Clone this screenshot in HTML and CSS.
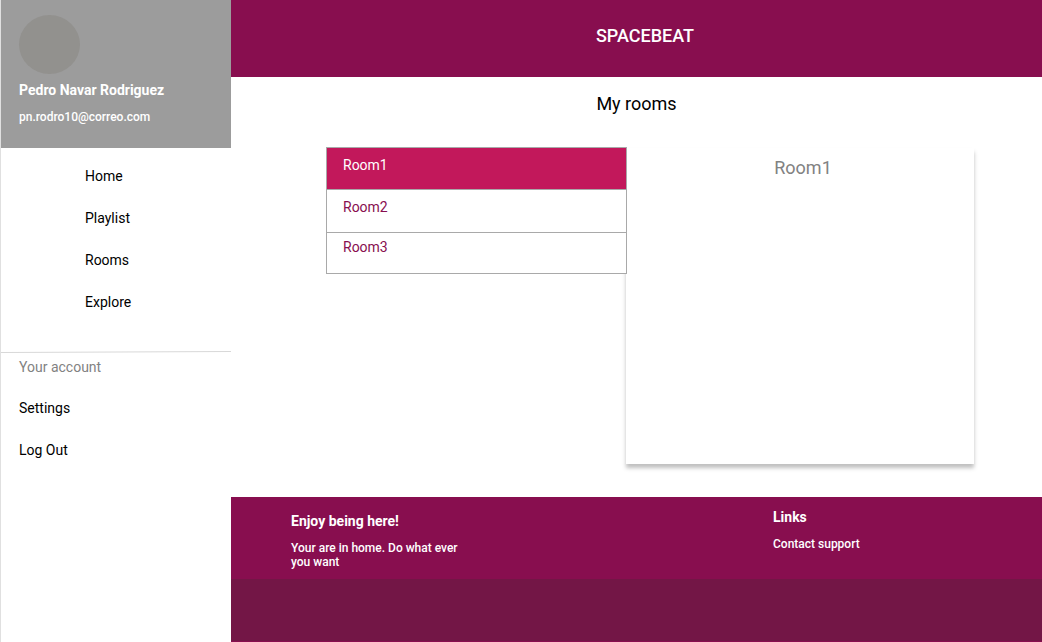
FILE: index.html
```html
<!DOCTYPE html>
<html lang="en">
<head>
<meta charset="utf-8">
<meta name="viewport" content="width=device-width, initial-scale=1">
<title>Spacebeat</title>
<link rel="stylesheet" href="styles.css">
</head>
<body>
<div class="app">
  <aside class="sidebar">
    <div class="profile">
      <div class="avatar"></div>
      <p class="profile-name">Pedro Navar Rodriguez</p>
      <p class="profile-mail">pn.rodro10@correo.com</p>
    </div>
    <nav class="menu menu-main">
      <a href="#home">Home</a>
      <a href="#playlist">Playlist</a>
      <a href="#rooms">Rooms</a>
      <a href="#explore">Explore</a>
    </nav>
    <svg class="divider" viewBox="0 0 230 2" preserveAspectRatio="none" aria-hidden="true"><path d="M0 1.5L230 .5" stroke="#d8d8d8" stroke-width="1"/></svg>
    <h2 class="account-title">Your account</h2>
    <nav class="menu menu-account">
      <a href="#settings">Settings</a>
      <a href="#logout">Log Out</a>
    </nav>
  </aside>
  <div class="page">
    <header class="topbar"><h1>SPACEBEAT</h1></header>
    <main class="content">
      <h2 class="content-title">My rooms</h2>
      <div class="rooms">
        <div class="room-list">
          <button type="button" class="room room-active">Room1</button>
          <button type="button" class="room">Room2</button>
          <button type="button" class="room">Room3</button>
        </div>
        <section class="room-panel"><h3>Room1</h3></section>
      </div>
    </main>
    <footer class="footer">
      <div class="footer-main">
        <section class="footer-about">
          <h2>Enjoy being here!</h2>
          <p>Your are in home. Do what ever you want</p>
        </section>
        <section class="footer-links">
          <h2>Links</h2>
          <a href="#support">Contact support</a>
        </section>
      </div>
      <div class="footer-strip"></div>
    </footer>
  </div>
</div>
</body>
</html>
```

FILE: styles.css
```css
* {
  box-sizing: border-box;
}

body,
h1,
h2,
h3,
p {
  margin: 0;
}

body {
  font-family: Roboto, "Liberation Sans", sans-serif;
  font-size: 14px;
  line-height: 20px;
  color: #000;
  background: #fff;
}

a {
  color: inherit;
  text-decoration: none;
}

.app {
  display: grid;
  grid-template-columns: 231px 1fr;
  min-height: 100vh;
}

.sidebar {
  border-left: 1px solid #e0e0e0;
}

.profile {
  padding: 15px 18px 21px;
  color: #fff;
  background: #9c9c9c;
}

.avatar {
  width: 61px;
  height: 59px;
  border-radius: 50%;
  background: #92918e;
}

.profile-name {
  margin-top: 6px;
  font-weight: 700;
}

.profile-mail {
  margin-top: 7px;
  font-size: 12px;
  font-weight: 500;
}

.menu {
  display: flex;
  flex-direction: column;
  gap: 22px;
}

.menu-main {
  padding: 18px 18px 39px 84px;
}

.divider {
  display: block;
  width: 100%;
  height: 2px;
}

.account-title {
  padding: 4px 18px 0;
  font-size: 14px;
  font-weight: 400;
  color: #828282;
}

.menu-account {
  padding: 21px 18px;
}

.page {
  display: flex;
  flex-direction: column;
}

.topbar {
  padding: 24px 0 29px 17px;
  text-align: center;
  color: #fff;
  background: #880e4f;
}

.topbar h1 {
  font-size: 18px;
  font-weight: 500;
  line-height: 24px;
}

.content {
  flex: 1;
  display: flex;
  flex-direction: column;
  padding: 15px 68px 33px 95px;
}

.content-title {
  margin: 0 -68px 0 -95px;
  font-size: 18px;
  font-weight: 400;
  line-height: 24px;
  text-align: center;
}

.rooms {
  flex: 1;
  display: grid;
  grid-template-columns: 300fr 348fr;
  margin-top: 31px;
}

.room-list {
  z-index: 1;
  display: flex;
  flex-direction: column;
  align-self: start;
  margin-right: -1px;
  border: 1px solid #a9a9a9;
}

.room {
  padding: 7px 16px 14px;
  border: 0;
  font: inherit;
  text-align: left;
  color: #880e4f;
  background: #fff;
}

.room + .room {
  border-top: 1px solid #a9a9a9;
}

.room:nth-child(2) {
  padding-bottom: 15px;
  padding-top: 7px;
}

.room:last-child {
  padding-top: 4px;
  padding-bottom: 16px;
}

.room-active {
  color: #fff;
  background: #c2185b;
}

.room-panel {
  margin-top: 1px;
  padding: 8px 0 0 6px;
  text-align: center;
  background: #fff;
  box-shadow: 0 4px 4px rgba(0, 0, 0, 0.25);
}

.room-panel h3 {
  font-size: 18px;
  font-weight: 400;
  line-height: 24px;
  color: #828282;
}

.footer {
  padding-bottom: 1px;
  color: #fff;
  background: #880e4f;
}

.footer-main {
  display: grid;
  grid-template-columns: 482fr 269fr;
  padding: 10px 0 10px 60px;
}

.footer h2 {
  font-size: 14px;
  font-weight: 700;
}

.footer-about {
  margin-top: 4px;
}

.footer-about p {
  max-width: 180px;
  margin-top: 10px;
  font-size: 12px;
  font-weight: 500;
  line-height: 14px;
}

.footer-links a {
  display: block;
  margin-top: 10px;
  font-size: 12px;
  font-weight: 500;
  line-height: 14px;
}

.footer-strip {
  height: 62px;
  background: #731646;
}
```
